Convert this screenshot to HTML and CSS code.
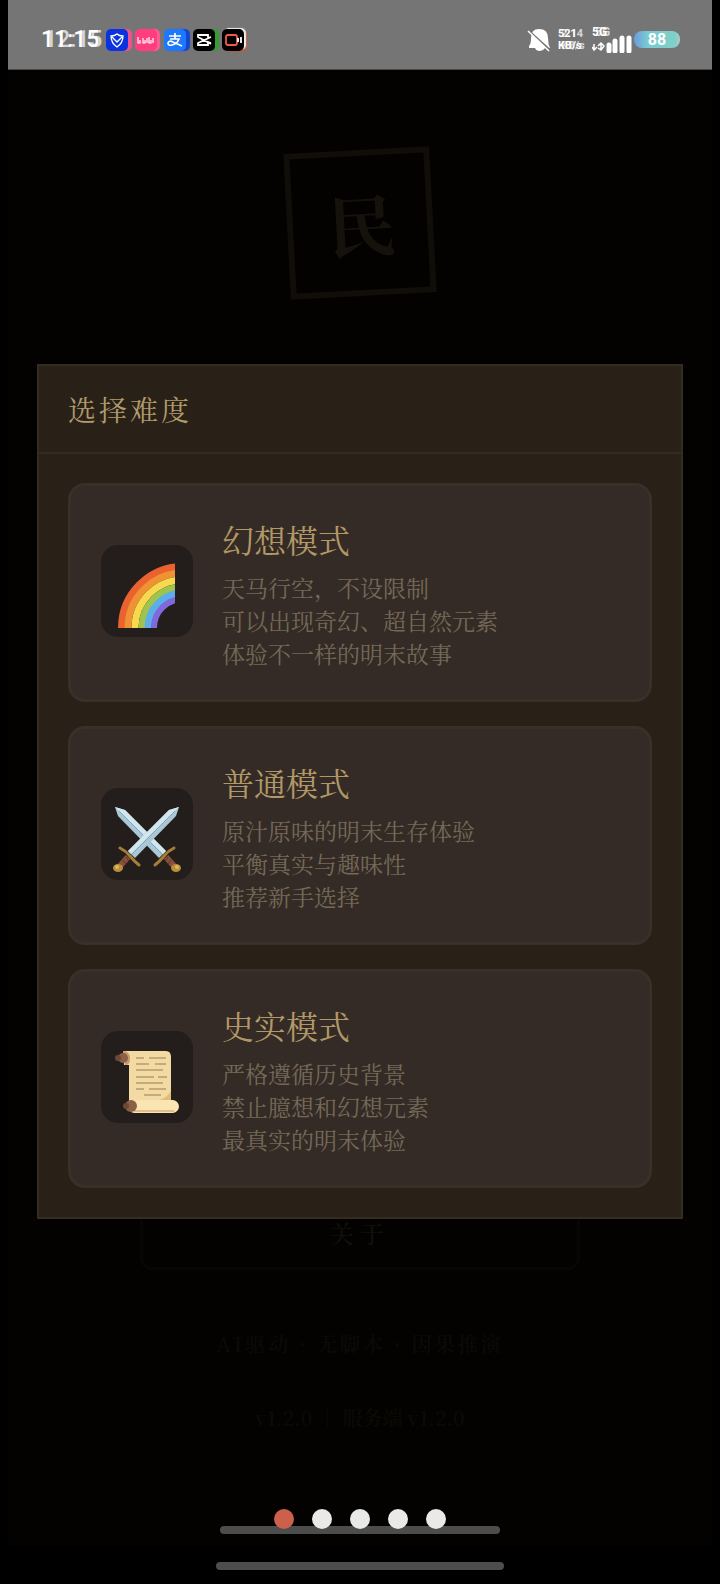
FILE: index.html
```html
<!DOCTYPE html>
<html lang="zh-CN">
<head>
  <meta charset="UTF-8">
  <meta name="viewport" content="width=device-width, initial-scale=1">
  <title>选择难度</title>
  <link rel="stylesheet" href="styles.css">
</head>
<body>
  <div class="screen">
    <header class="status-bar">
      <div class="status-left">
        <div class="time ghosted"><span>11:15</span><span class="ghost">12:15</span></div>
        <div class="apps">
          <svg class="app app-shield" viewBox="0 0 22 22"><path d="M5 7Q9 7 11 5Q13 7 17 7Q17 14 11 18Q5 14 5 7ZM6 8L11 13L16 8" fill="none" stroke="#fff" stroke-width="1.3"/></svg>
          <svg class="app app-pink" viewBox="0 0 22 22"><path d="M3 8V14H5V11M8 9V14H10V11M12 14V9M14 8V14H16V11M18 9V14" fill="none" stroke="#fff" stroke-width="1.2"/></svg>
          <svg class="app app-pay" viewBox="0 0 22 22"><path d="M5 7H17M11 4V10M6 10H15Q13 15 8 16Q4 17 4 14Q5 11 9 13L18 17" fill="none" stroke="#fff" stroke-width="1.7"/></svg>
          <svg class="app app-cut" viewBox="0 0 22 22"><path d="M18 8L15 9V6H5V8L18 15M18 8L5 14V16H15V13L18 14" fill="none" stroke="#fff" stroke-width="1.8"/></svg>
          <svg class="app app-record" viewBox="0 0 22 22"><path d="M13 16H6Q4 16 4 14V8Q4 6 6 6H13Q15 6 15 8V14Q15 16 13 16Z" fill="none" stroke="#ef5a4e" stroke-width="1.8"/><path d="M16 9V13M19 8V14" stroke="#fff" stroke-width="1.8"/></svg>
        </div>
      </div>
      <div class="status-right">
        <svg class="bell" viewBox="0 0 24 24"><path d="M2 18Q4 16 4 10Q4 1 12 1Q21 1 21 10Q21 16 23 20H2Z" fill="#fff"/><path d="M8 20H18Q16 23 13 23Q9 23 8 20Z" fill="#fff"/><path d="M2 3L23 22" stroke="#757575" stroke-width="2"/><path d="M1 3L22 23" stroke="#fff" stroke-width="1.5"/></svg>
        <div class="speed ghosted"><span>521<br>KB/s</span><span class="ghost">2.14<br>KB/s</span></div>
        <div class="network">
          <div class="ghosted"><span>5G</span><span class="ghost">5G</span></div>
          <svg viewBox="0 0 40 24"><path d="M2 15V21M0 18L2 21L5 18M9 14V21M6 17L9 14L12 17L9 21L6 19" fill="none" stroke="#fff" stroke-width="1.5"/><path d="M17 22V16M23 22V12M30 22V9M37 22V9" stroke="#fff" stroke-width="5" stroke-linecap="round"/></svg>
        </div>
        <div class="battery">88</div>
      </div>
    </header>

    <main class="menu">
      <div class="seal">民</div>
      <button class="about">关于</button>
      <p class="tagline">AI驱动 · 无脚本 · 因果推演</p>
      <p class="version">v1.2.0 ｜ 服务端 v1.2.0</p>
    </main>
  </div>

  <div class="modal">
    <section class="dialog" role="dialog" aria-labelledby="dialog-title">
      <h1 id="dialog-title">选择难度</h1>
      <div class="modes">
        <button class="mode">
          <span class="mode-icon">
            <svg viewBox="0 0 92 92">
              <clipPath id="arc"><rect x="16" y="17" width="58" height="66"/></clipPath>
              <g clip-path="url(#arc)" fill="none">
                <circle cx="82" cy="83" r="61" stroke="#e9622f" stroke-width="8"/>
                <circle cx="82" cy="83" r="55" stroke="#f09234" stroke-width="7"/>
                <circle cx="82" cy="83" r="48" stroke="#f6d94c" stroke-width="7"/>
                <circle cx="82" cy="83" r="41" stroke="#a0c34e" stroke-width="7"/>
                <circle cx="82" cy="83" r="35" stroke="#5baee8" stroke-width="7"/>
                <circle cx="82" cy="83" r="29" stroke="#8169dd" stroke-width="6"/>
              </g>
            </svg>
          </span>
          <span class="mode-text">
            <strong>幻想模式</strong>
            <span>天马行空，不设限制<br>可以出现奇幻、超自然元素<br>体验不一样的明末故事</span>
          </span>
        </button>
        <button class="mode">
          <span class="mode-icon">
            <svg viewBox="0 0 92 92">
              <defs>
                <g id="sword">
                  <path d="M78 19L75 28L34 70L27 63L68 22Z" fill="#a9c7d6"/>
                  <path d="M78 19L68 22L27 63L30 66Z" fill="#d3e5ed"/>
                  <path d="M74 23L31 66" stroke="#84a6b8" stroke-width="1"/>
                  <path d="M27 69L19 78" stroke="#87503a" stroke-width="6"/>
                  <path d="M25 69L28 73M22 72L25 76" stroke="#5e3427" stroke-width="1"/>
                  <path d="M19 60Q25 63 29 68T38 77" fill="none" stroke="#a67f36" stroke-width="3" stroke-linecap="round"/>
                  <ellipse cx="17" cy="80" rx="5" ry="4" fill="#b98d3a"/>
                  <circle cx="16" cy="79" r="2" fill="#dcb75e"/>
                </g>
              </defs>
              <use href="#sword" transform="translate(92 0) scale(-1 1)"/>
              <use href="#sword"/>
            </svg>
          </span>
          <span class="mode-text">
            <strong>普通模式</strong>
            <span>原汁原味的明末生存体验<br>平衡真实与趣味性<br>推荐新手选择</span>
          </span>
        </button>
        <button class="mode">
          <span class="mode-icon">
            <svg viewBox="0 0 92 92">
              <path d="M22 20H65Q70 20 70 26V72H28V34H23Z" fill="#f3d9a2"/>
              <path d="M22 20Q29 20 29 28Q29 34 24 34Z" fill="#c79b68"/>
              <circle cx="22" cy="27" r="5" fill="#8a6046"/>
              <circle cx="17" cy="27" r="3" fill="#6d4836"/>
              <path d="M35 27H43M48 27H65M35 33H48M54 33H65M35 39H62M35 46H53M57 46H66M35 52H62M35 58H43M48 58H65M43 64H60" stroke="#b79a72" stroke-width="1.3"/>
              <path d="M70 60V69H58Q66 67 70 60Z" fill="#e3bd74"/>
              <rect x="27" y="69" width="51" height="13" rx="6.5" fill="#fae4b4"/>
              <path d="M33 80H73" stroke="#e2c085" stroke-width="2"/>
              <circle cx="30" cy="75" r="6" fill="#8a6046"/>
              <circle cx="25" cy="75" r="3" fill="#6d4836"/>
            </svg>
          </span>
          <span class="mode-text">
            <strong>史实模式</strong>
            <span>严格遵循历史背景<br>禁止臆想和幻想元素<br>最真实的明末体验</span>
          </span>
        </button>
      </div>
    </section>
  </div>

  <div class="pager">
    <div class="dots"><i class="active"></i><i></i><i></i><i></i><i></i></div>
    <div class="home-bar inner"></div>
    <div class="home-bar"></div>
  </div>
</body>
</html>
```
FILE: styles.css
```css
* {
  box-sizing: border-box;
}

body {
  margin: 0;
  background: #000;
  font-family: "Noto Serif CJK SC", "Noto Serif SC", "Noto Sans CJK SC", serif;
}

button {
  font-family: inherit;
  cursor: pointer;
}

.screen {
  margin: 0 8px;
  min-height: calc(100vh - 38px);
  background: #030200;
  display: flex;
  flex-direction: column;
}

/* status bar */
.status-bar {
  height: 70px;
  padding: 10px 32px 0 33px;
  background: #757575;
  border-bottom: 1px solid #4a4a4a;
  display: flex;
  align-items: center;
  justify-content: space-between;
  font-family: Roboto, sans-serif;
  font-weight: 700;
  color: #fff;
}

.status-left,
.status-right,
.apps {
  display: flex;
  align-items: center;
}

.status-left {
  gap: 5px;
}

.ghosted {
  position: relative;
}

.ghost {
  position: absolute;
  left: 3px;
  top: 0;
  opacity: 0.7;
}

.time {
  width: 60px;
  font-size: 23px;
  font-weight: 500;
  line-height: 24px;
}

.apps {
  gap: 7px;
}

.app {
  width: 22px;
  height: 22px;
  border-radius: 5px;
}

.app-shield {
  background: #0b32e0;
  box-shadow: 4px 0 1px #f0538c;
}

.app-pink {
  background: #ff3d7f;
  box-shadow: 3px 0 1px #ff5c94;
}

.app-pay {
  background: #1e78ff;
  box-shadow: 4px 0 1px #1345d0;
}

.app-cut {
  background: #000;
  box-shadow: 4px 0 1px #379b35;
}

.app-record {
  background: #000;
  box-shadow: 2px -1px 1px #eee, 3px 1px 1px #bd5a3d;
}

.bell {
  width: 24px;
  height: 24px;
}

.speed {
  width: 26px;
  margin-left: 7px;
  font-size: 11px;
  line-height: 12px;
}

.network {
  width: 40px;
  margin-left: 8px;
  font-size: 12px;
  line-height: 10px;
}

.network svg {
  display: block;
  width: 40px;
  height: 24px;
  margin-top: -8px;
}

.battery {
  width: 46px;
  height: 17px;
  margin-left: 2px;
  border-radius: 8px;
  background: linear-gradient(90deg, #6b9be0, #79cbd0 30%, #7fd0c8 90%, #b5c8c8);
  font-size: 16px;
  line-height: 17px;
  text-align: center;
}

/* dimmed main menu */
.menu {
  flex: 1;
  display: flex;
  flex-direction: column;
  align-items: center;
  padding: 80px 0 113px;
  color: #0b0a07;
}

.seal {
  width: 146px;
  height: 146px;
  padding-left: 4px;
  border: 6px solid #110e09;
  color: #15110b;
  font-size: 68px;
  font-weight: 700;
  line-height: 134px;
  text-align: center;
  transform: rotate(-3deg);
}

.about {
  width: 440px;
  max-width: 64%;
  height: 76px;
  margin-top: auto;
  border: 3px solid #070604;
  border-radius: 12px;
  background: transparent;
  color: #11100c;
  font-size: 24px;
  font-weight: 500;
  letter-spacing: 6px;
}

.menu p {
  margin: 0;
  font-size: 20px;
  font-weight: 600;
  line-height: 30px;
}

.menu .tagline {
  margin-top: 59px;
  letter-spacing: 3px;
}

.menu .version {
  margin-top: 44px;
}

/* difficulty dialog */
.modal {
  position: fixed;
  inset: 0;
  padding: 0 37px 2px;
  display: flex;
  align-items: center;
}

.dialog {
  width: 100%;
  background: #292118;
  border: 2px solid #332c20;
}

.dialog h1 {
  margin: 0;
  padding: 23px 29px;
  border-bottom: 2px solid #352c21;
  color: #b19b6b;
  font-size: 28px;
  font-weight: 400;
  line-height: 40px;
  letter-spacing: 3px;
}

.modes {
  display: flex;
  flex-direction: column;
  gap: 24px;
  padding: 29px;
}

.mode {
  display: flex;
  align-items: center;
  gap: 29px;
  width: 100%;
  padding: 27px 30px 29px;
  border: 3px solid #3a3029;
  border-radius: 17px;
  background: #342b26;
  text-align: left;
}

.mode-icon {
  flex: none;
  width: 92px;
  height: 92px;
  border-radius: 17px;
  background: #231e1b;
}

.mode-icon svg {
  display: block;
}

.mode-text strong,
.mode-text span {
  display: block;
  font-weight: 400;
}

.mode-text strong {
  margin-bottom: 6px;
  color: #b39867;
  font-size: 32px;
  line-height: 52px;
}

.mode-text span {
  color: #746957;
  font-size: 23px;
  line-height: 33px;
}

/* page dots and home bars */
.pager {
  position: fixed;
  left: 0;
  right: 0;
  bottom: 14px;
  display: flex;
  flex-direction: column;
  align-items: center;
}

.dots {
  position: relative;
  z-index: 1;
  display: flex;
  gap: 18px;
  margin-bottom: -3px;
}

.dots i {
  width: 20px;
  height: 20px;
  border-radius: 50%;
  background: #e9e9e7;
}

.dots .active {
  background: #cd604c;
}

.home-bar {
  width: 40%;
  height: 8px;
  border-radius: 4px;
  background: #4d4d4d;
}

.home-bar.inner {
  width: 39%;
  margin-bottom: 28px;
}
```
